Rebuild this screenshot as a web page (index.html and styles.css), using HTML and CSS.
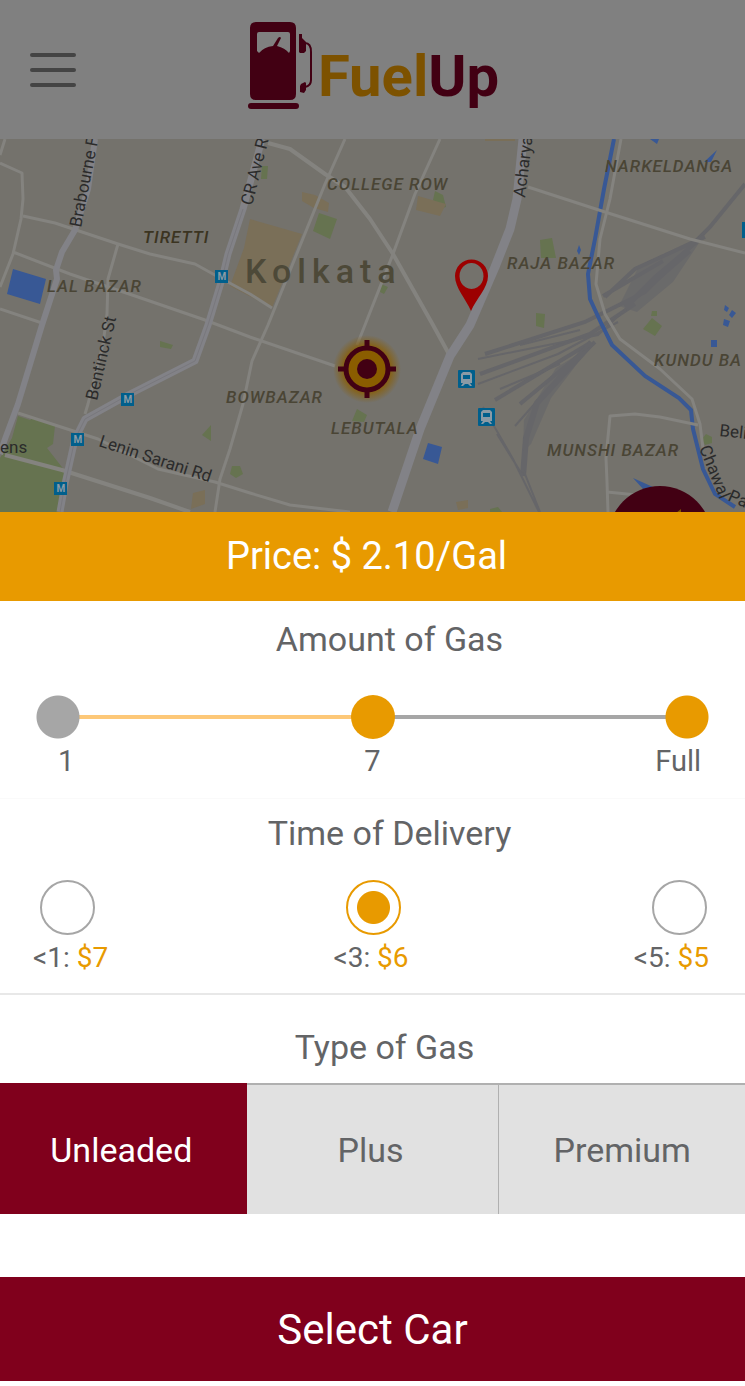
FILE: index.html
```html
<!DOCTYPE html>
<html lang="en">
<head>
    <meta charset="UTF-8">
    <meta name="viewport" content="width=device-width, initial-scale=1.0">
    <title>FuelUp</title>
    <link rel="stylesheet" href="styles.css">
</head>
<body>
    <header class="header">
        <button type="button" class="menu-button" aria-label="Menu">
            <span></span>
            <span></span>
            <span></span>
        </button>
        <a href="#" class="logo">
            <svg class="logo-pump" viewBox="0 0 68 92" width="68" height="92" aria-hidden="true">
                <path fill="#420013" fill-rule="evenodd" d="M10 3h34q6 0 6 6v66q0 6-6 6H10q-6 0-6-6V9q0-6 6-6zM13 13q-2 0-2 2v17l2 2q5-6 14-7l5-8q2-2 3 0l-4 8q8 2 12 7l1-2V15q0-2-2-2z"/>
                <rect x="2" y="84" width="51" height="6" rx="3" fill="#420013"/>
                <path fill="#420013" d="M53 15l3 0 0 4 4 4v9l-2 2h-4l-1-1V20zM55 65l4-2 1 1v7l-2 3-4-1v-6z"/>
                <path fill="none" stroke="#420013" stroke-width="2" d="M59 24c5 0 6 4 6 9v28q0 6-6 7"/>
            </svg>
            <span class="logo-text"><span class="logo-fuel">Fuel</span><span class="logo-up">Up</span></span>
        </a>
    </header>

    <main>
        <section class="map">
            <svg class="map-canvas" viewBox="0 0 745 373" role="img" aria-label="Map of Kolkata">
                <rect width="745" height="373" fill="#74726c"/>

                <!-- parks and blocks -->
                <g fill="#667350">
                    <path d="M18 277l12 4 4-3 21 9-2 18-6 4 18 23-5 41H0v-54l12-20z"/>
                    <path d="M319 74l18 6-7 20-17-8z"/>
                    <path d="M262 27h6l-1 13h-6zM435 52l8 4 3 12-8 2-5-9z"/>
                    <path d="M381 145l7 3-4 7-4-2zM540 101l12-2 4 20h-15z"/>
                    <path d="M536 174l9 1-1 14-8-2zM160 202l13 4-2 4-11-2z"/>
                    <path d="M652 179l10 8-7 10-12-7zM211 286v16l-9-6zM232 327h8l3 8-7 4-6-4z"/>
                    <path d="M357 270l10 6-3 7-12-1zM706 295l6 3v6l-7 2-3-6z"/>
                    <path d="M652 172h5v5h-6zM490 370l8-2 4 5h-12z"/>
                </g>
                <g fill="#7a6f58">
                    <path d="M250 80l52 15-30 74-42-22 14-38z"/>
                    <path d="M302 53l13 3 14 8-1 9-14-4-12-7zM418 57l28 8-6 12-24-6z"/>
                    <path d="M193 354l12-3v14l-14 5zM485 0h30v2h-30zM456 363l12-2v8l-10 2z"/>
                </g>
                <g fill="#385895">
                    <path d="M13 130l33 10-6 25-33-10z"/>
                    <path d="M428 304l14 4-4 17-15-5zM650 0h9l-2 5zM717 11l-6 12h-7z"/>
                    <path d="M579 106l2 5-2 5-2-4zM725 166l4 3-2 4-3-2zM732 171l4 3-4 5-3-3zM724 180l6 2-2 6-5-2z"/>
                    <path d="M711 201h6v7h-6zM633 339l20 9-10 2z"/>
                </g>

                <!-- railway yard -->
                <g stroke="#666669" fill="none" stroke-width="4">
                    <path d="M745 45l-35 43-65 65-60 30-100 32"/>
                    <path d="M705 98l-70 32-30 28M700 100l-45 38-30 30M690 112l-40 35-25 20M603 157l60-35M480 235l110-40 45-30M495 261l95-57M520 265l75-62"/>
                    <path stroke-width="2" d="M478 220l120-24 100-94M478 245l80-30 60-32M500 250l60-25M520 206l60-15M515 287l75-85"/>
                    <path stroke-width="6" d="M592 204l-55 60-11 35-3 38"/>
                    <path stroke-width="2" d="M483 268l30 52 26 53M497 295l26 42M523 330l17 43"/>
                </g>
                <path fill="#666669" fill-opacity=".7" d="M705 95l-66 32-20 40 18 6 36-30zM590 208l-34 21-32 52-1 32 8-8 20-46z"/>

                <!-- canal -->
                <path fill="none" stroke="#385895" stroke-width="4" d="M614 0l-10 50-9 50-7 35 2 25 12 26 10 20 33 31 34 22 12 12 2 19 10 40 12 25 20 13"/>

                <!-- small streets -->
                <g fill="none" stroke="#84837f" stroke-width="3" stroke-linejoin="round">
                    <path d="M0 24l22 10 1 26-2 20-8 35-13 33M5 0L0 16"/>
                    <path d="M23 77l32 7 63 21 32 10 45 10 18 10 37 20 22 14"/>
                    <path d="M13 113l57 22 68 23 67 23 45 17 85 29"/>
                    <path d="M118 105l-10 35-1 35-4 30-15 60-3 10M0 170l42 14"/>
                    <path d="M18 274l80 26 60 30 57 13 35 11 40 12 60 7"/>
                    <path stroke-width="4" d="M5 316l57 15 88 28 40 14"/>
                    <path d="M345 0l-20 45-57 141-16 36-9 43-13 45-10 30-5 33"/>
                    <path d="M440 0l-25 55-22 60-28 71-8 20"/>
                    <path stroke-width="4" d="M268 4l22 6 35 25 20 13 25 32 23 35 40 71 17 31"/>
                    <path d="M528 48l77 25 85 27 55 14"/>
                    <path d="M621 0l-11 60-10 40-4 45 9 30 15 25 40 30 32 30 8 25 3 25"/>
                    <path d="M608 373l-1-30-1-24 4-42 25-2 25 3 38 8M607 353l30 3"/>
                </g>

                <!-- main roads -->
                <g fill="none" stroke="#828287" stroke-linejoin="round">
                    <path stroke-width="6" d="M95 0l-7 50-13 41-13 22-6 18 1 9-15 46-24 79-13 35-5 15"/>
                    <path stroke-width="7" d="M262 0l-19 70-15 45-6 25-14 46-13 36-65 33-45 25-10 20-10 45-5 28"/>
                    <path stroke-width="9" d="M523 0l-6 60-7 30-15 38-25 58-20 31-30 73-28 83"/>
                </g>
                <path fill="none" stroke="#79787d" d="M243 70l-15 45-6 25-14 46-13 36-65 33-45 25-10 20-10 45-5 28"/>

                <!-- metro and railway stations -->
                <g fill="#005f8c">
                    <rect x="215" y="131" width="13" height="13"/>
                    <rect x="121" y="254" width="13" height="13"/>
                    <rect x="71" y="294" width="13" height="13"/>
                    <rect x="54" y="343" width="13" height="13"/>
                    <rect x="742" y="83" width="3" height="16"/>
                    <rect x="458" y="231" width="17" height="18" rx="1"/>
                    <rect x="478" y="269" width="17" height="18" rx="1"/>
                </g>
                <g class="metro-mark">
                    <text x="222" y="141">M</text>
                    <text x="128" y="264">M</text>
                    <text x="78" y="304">M</text>
                    <text x="61" y="353">M</text>
                </g>
                <g fill="#8a9aa5" fill-rule="evenodd">
                    <path d="M463 233h7l2 2v9h-2l2 3h-2l-2-2h-3l-2 2h-2l2-3h-2v-9zM463 236v4h7v-4z"/>
                    <path d="M483 271h7l2 2v9h-2l2 3h-2l-2-2h-3l-2 2h-2l2-3h-2v-9zM483 274v4h7v-4z"/>
                </g>

                <g class="area-names">
                    <text x="143" y="104" class="strong">TIRETTI</text>
                    <text x="47" y="153">LAL BAZAR</text>
                    <text x="327" y="51">COLLEGE ROW</text>
                    <text x="605" y="33">NARKELDANGA</text>
                    <text x="507" y="130">RAJA BAZAR</text>
                    <text x="226" y="264">BOWBAZAR</text>
                    <text x="331" y="295">LEBUTALA</text>
                    <text x="547" y="317">MUNSHI BAZAR</text>
                    <text x="654" y="227">KUNDU BA</text>
                </g>
                <text x="245" y="144" class="city-name">Kolkata</text>
                <g class="road-names">
                    <text transform="translate(81 89) rotate(-79)">Brabourne F</text>
                    <text transform="translate(252 67) rotate(-76)">CR Ave R</text>
                    <text transform="translate(525 59) rotate(-83)">Acharya</text>
                    <text transform="translate(97 262) rotate(-77)">Bentinck St</text>
                    <text transform="translate(98 307) rotate(18)">Lenin Sarani Rd</text>
                    <text x="0" y="314">ens</text>
                    <text transform="translate(719 297) rotate(6)">Beli</text>
                    <text transform="translate(699 309) rotate(68)">Chawal</text>
                    <text transform="translate(727 361) rotate(24)">Pa</text>
                </g>

                <!-- station pin -->
                <path fill="#9c0000" fill-rule="evenodd" d="M471 172c-5-12-16-23-16-35a16 16 0 0 1 33 0c0 12-12 23-17 35zM471 124a12 13 0 1 0 1 0z"/>

                <!-- current position -->
                <defs>
                    <radialGradient id="glow">
                        <stop offset=".6" stop-color="#8a5d00"/>
                        <stop offset="1" stop-color="#8a5d00" stop-opacity="0"/>
                    </radialGradient>
                </defs>
                <circle cx="367" cy="230" r="34" fill="url(#glow)"/>
                <circle cx="367" cy="230" r="21" fill="#8a5d00" stroke="#420013" stroke-width="5"/>
                <circle cx="367" cy="230" r="10" fill="#420013"/>
                <path stroke="#420013" stroke-width="5" d="M367 201v8M367 251v8M338 230h8M388 230h8"/>
            </svg>
            <button type="button" class="map-action" aria-label="Order fuel">
                <svg viewBox="0 0 104 104" aria-hidden="true">
                    <path d="M68 27l5-4v8z" fill="#7d5200"/>
                </svg>
            </button>
        </section>

        <p class="price">Price: $ 2.10/Gal</p>

        <form>
            <section class="amount">
                <h2 class="section-title"><label for="amount">Amount of Gas</label></h2>
                <input type="range" id="amount" class="amount-range" name="amount" min="1" max="13" value="7">
                <div class="amount-marks">
                    <span>1</span>
                    <span>7</span>
                    <span>Full</span>
                </div>
            </section>

            <section class="delivery">
                <h2 class="section-title">Time of Delivery</h2>
                <div class="delivery-options">
                    <input type="radio" name="delivery" id="delivery-1" value="1">
                    <input type="radio" name="delivery" id="delivery-3" value="3" checked>
                    <input type="radio" name="delivery" id="delivery-5" value="5">
                </div>
                <div class="delivery-labels">
                    <label for="delivery-1">&lt;1: <span class="cost">$7</span></label>
                    <label for="delivery-3">&lt;3: <span class="cost">$6</span></label>
                    <label for="delivery-5">&lt;5: <span class="cost">$5</span></label>
                </div>
            </section>

            <section class="gas-type">
                <h2 class="section-title">Type of Gas</h2>
                <div class="gas-options">
                    <button type="button" class="gas-option active">Unleaded</button>
                    <button type="button" class="gas-option">Plus</button>
                    <button type="button" class="gas-option">Premium</button>
                </div>
            </section>

            <button type="submit" class="submit-button">Select Car</button>
        </form>
    </main>
</body>
</html>
```
FILE: styles.css
```css
* {
    box-sizing: border-box;
}

body {
    margin: 0;
    font-family: Roboto, "Liberation Sans", sans-serif;
    color: #636466;
    background-color: #fff;
}

button {
    border: 0;
    padding: 0;
    font-family: inherit;
    cursor: pointer;
}

/* header */
.header {
    display: grid;
    grid-template-columns: 1fr auto 1fr;
    align-items: center;
    height: 139px;
    padding: 0 30px;
    background-color: #808080;
}

.menu-button {
    display: flex;
    flex-direction: column;
    gap: 11px;
    width: 46px;
    background: none;
}

.menu-button span {
    height: 4px;
    border-radius: 2px;
    background-color: #444;
}

.logo {
    display: flex;
    align-items: center;
    gap: 4px;
    text-decoration: none;
}

.logo-pump {
    margin-bottom: 10px;
}

.logo-text {
    padding-top: 12px;
    font-size: 58px;
    font-weight: bold;
    line-height: 80px;
}

.logo-fuel {
    color: #7d5200;
}

.logo-up {
    color: #420013;
}

/* map */
.map {
    position: relative;
    overflow: hidden;
}

.map-canvas {
    display: block;
    width: 100%;
}

.map-action {
    position: absolute;
    right: 33px;
    bottom: -78px;
    width: 104px;
    height: 104px;
    border-radius: 50%;
    background-color: #420013;
}

.area-names {
    font-size: 17px;
    font-style: italic;
    font-weight: 500;
    letter-spacing: 1px;
    fill: #4a4535;
}

.area-names .strong {
    fill: #3b3421;
}

.city-name {
    font-size: 34px;
    font-weight: 500;
    letter-spacing: 6px;
    fill: #4d4938;
}

.road-names {
    font-size: 17px;
    fill: #2b2b2b;
}

.metro-mark {
    font-size: 10px;
    font-weight: bold;
    text-anchor: middle;
    fill: #8a9aa5;
}

/* order form */
.price {
    margin: 0;
    padding-right: 12px;
    font-size: 38px;
    line-height: 89px;
    text-align: center;
    color: #fff;
    background-color: #e89a00;
}

.section-title {
    margin: 0;
    padding-left: 34px;
    font-size: 34px;
    font-weight: normal;
    line-height: 44px;
    text-align: center;
}

.amount {
    padding: 16px 36px 19px;
    border-bottom: 1px solid #fafafa;
}

.amount-range {
    display: block;
    appearance: none;
    width: 100%;
    height: 44px;
    margin: 34px 0 0;
    background:
        radial-gradient(circle at 22px 22px, #a6a6a6 21px, transparent 22px),
        radial-gradient(circle at calc(100% - 22px) 22px, #e89a00 21px, transparent 22px),
        linear-gradient(to right, #fdc878 50%, #a6a6a6 50%) center / calc(100% - 44px) 4px no-repeat;
}

.amount-range::-webkit-slider-thumb {
    appearance: none;
    width: 44px;
    height: 44px;
    border-radius: 50%;
    background-color: #e89a00;
}

.amount-marks {
    display: grid;
    grid-template-columns: 1fr auto 1fr;
    padding: 4px 8px 0 22px;
    font-size: 29px;
    line-height: 36px;
}

.amount-marks span:nth-child(2) {
    padding-right: 14px;
}

.amount-marks span:last-child {
    text-align: right;
}

.delivery {
    padding: 12px 0 17px;
    border-bottom: 2px solid #e8e8e8;
}

.delivery-options {
    display: flex;
    justify-content: space-between;
    padding: 25px 38px 0 40px;
}

.delivery-options input {
    appearance: none;
    width: 55px;
    height: 55px;
    margin: 0;
    border: 2px solid #a6a6a6;
    border-radius: 50%;
}

.delivery-options input:checked {
    border-color: #e89a00;
    background: radial-gradient(circle, #e89a00 16px, transparent 17px);
}

.delivery-labels {
    display: flex;
    justify-content: space-between;
    padding: 5px 36px 0 33px;
    font-size: 28px;
    line-height: 36px;
}

.cost {
    color: #e89a00;
}

.gas-type {
    padding-top: 30px;
}

.gas-type .section-title {
    padding-left: 24px;
}

.gas-options {
    display: grid;
    grid-template-columns: 49fr 50fr 49fr;
    margin-top: 14px;
}

.gas-option {
    height: 131px;
    padding-right: 4px;
    border-top: 2px solid #b0b0b0;
    font-size: 34px;
    color: #636466;
    background-color: #e1e1e1;
}

.gas-option:last-child {
    padding-right: 0;
    border-left: 1px solid #b0b0b0;
}

.gas-option.active {
    border-color: #80001c;
    color: #fff;
    background-color: #80001c;
}

.submit-button {
    display: block;
    width: 100%;
    height: 104px;
    margin: 63px 0 5px;
    font-size: 42px;
    color: #fff;
    background-color: #80001c;
}
```
